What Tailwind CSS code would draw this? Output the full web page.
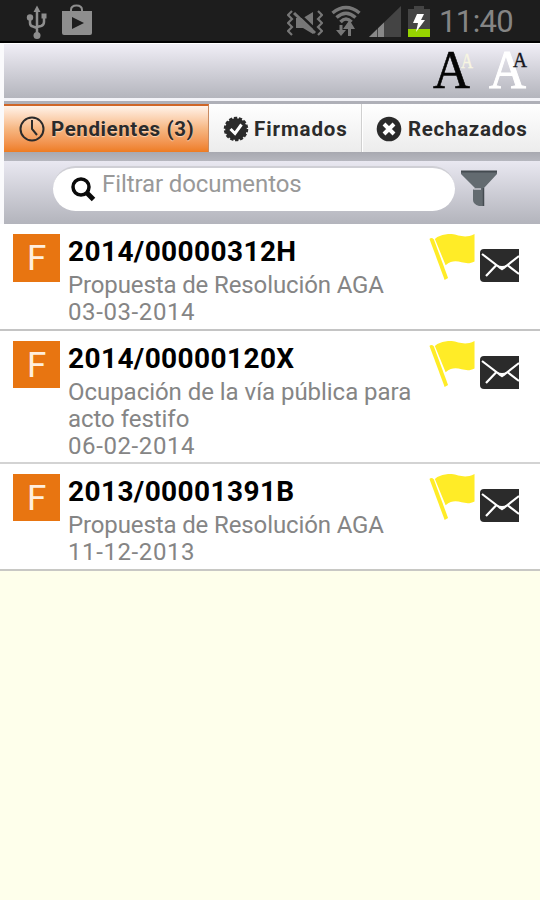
<!DOCTYPE html>
<html lang="es">
  <head>
    <meta charset="UTF-8" />
    <meta name="viewport" content="width=device-width, initial-scale=1.0" />
    <!-- tailwind cdn -->
    <script src="https://cdn.jsdelivr.net/npm/@tailwindcss/browser@4"></script>
    <title>Documentos pendientes</title>
  </head>
  <body class="bg-[#feffeb] font-['Roboto',sans-serif]">
    <!-- icons used more than once -->
    <svg class="hidden">
      <symbol id="flag" viewBox="0 0 48 48">
        <path d="M1 5 Q3 3 5.500 5.500 L20 45 L16.500 47 Z"></path>
        <path d="M6.500 5 L9 3 Q14 0.500 20 0 C29-1 35 6 47 0 L47 28 C36 34 29 22 17.500 32 Z"></path>
      </symbol>
      <symbol id="mail" viewBox="0 0 40 33">
        <path d="M4 0 H39 V33 H4 Q0 33 0 29 V4 Q0 0 4 0 Z" fill="#2b2b2b"></path>
        <path
          d="M2 5 L19 18 Q22 21 25 18 L39 7 M6 27 L16 16.500 M28 16.500 L39 25"
          fill="none"
          stroke="#fff"
          stroke-width="2.200"
        ></path>
        <path d="M17 16 Q22 18 27 16 L22 21.500 Z" fill="#fff"></path>
      </symbol>
    </svg>
    <div class="flex h-[900px] w-[540px] flex-col overflow-hidden">
      <!-- status bar -->
      <div class="flex h-[43px] shrink-0 items-start border-b-2 border-black bg-[#1d1d1d] pl-[26px] text-[#8e8e8e]">
        <svg class="mt-[5px] h-[35px] w-[22px]" viewBox="0 0 22 35" fill="none" stroke="currentColor" stroke-width="2.500">
          <path d="M11 5 V30 M4 13 V18 Q4 21 7 21.500 L11 23 M18 11 V17 Q18 20 15 21 L11 22"></path>
          <path d="M11 0.500 L14.500 7 H7.500 Z M15.500 8.500 H20.500 V13.500 H15.500 Z" fill="currentColor" stroke="none"></path>
          <circle cx="4" cy="12.500" r="3.200" fill="currentColor" stroke="none"></circle>
          <circle cx="11" cy="30.500" r="3.500" fill="currentColor" stroke="none"></circle>
        </svg>
        <svg class="mt-[4px] ml-[14px] h-[31px] w-[30px]" viewBox="0 0 30 31">
          <path d="M9 8 V6 Q9 1.500 14.500 1.500 T20 6 V8" fill="none" stroke="currentColor" stroke-width="2"></path>
          <path d="M0 7 H30 V29 Q30 31 28 31 H2 Q0 31 0 29 Z" fill="currentColor"></path>
          <path d="M10 13 L22 19 L10 25 Z" fill="#1d1d1d"></path>
        </svg>
        <svg class="mt-[10px] ml-[195px] h-[26px] w-[36px] text-[#777]" viewBox="0 0 36 26" fill="none" stroke="currentColor" stroke-width="2.200">
          <path d="M5 1 L1 5 L5 9 L1 13 L5 17 L1 21 L5 25 M31 1 L35 5 L31 9 L35 13 L31 17 L35 21 L31 25"></path>
          <path d="M9 8 H16 L26 2 V24 L16 18 H9 Z" fill="currentColor" stroke="none"></path>
          <path d="M9 1 L30 21" stroke="#1d1d1d" stroke-width="2.500"></path>
          <path d="M7 3 L28 23" stroke-width="3"></path>
        </svg>
        <svg class="mt-[5px] ml-[8px] h-[32px] w-[30px] text-[#777]" viewBox="0 0 30 32" fill="none" stroke="currentColor" stroke-width="3.500">
          <path d="M1.500 8 Q15-3 28.500 8 M5.500 12.500 Q15 4 24.500 12.500 M9.500 17 Q15 11 20.500 17"></path>
          <path d="M10 20 V27 M18.500 31 V20" stroke-width="3"></path>
          <path d="M5 25 H15 L10 31 Z M12 24 L18.500 15 L24 24 Z" fill="currentColor" stroke="none"></path>
        </svg>
        <svg class="mt-[6px] ml-[8px] h-[31px] w-[32px]" viewBox="0 0 32 31">
          <path d="M0 31 L32 0 V31 Z" fill="#444"></path>
          <path d="M0 31 L8 23.300 V31 Z M9 31 V22.300 L15 16.500 V31 Z" fill="#888"></path>
        </svg>
        <svg class="mt-[6px] ml-[7px] h-[32px] w-[22px]" viewBox="0 0 22 32">
          <path d="M0 3 H6 V0 H16 V3 H22 V23 H0 Z" fill="#444"></path>
          <path d="M0 23 H22 V31 H0 Z" fill="#96d400"></path>
          <path d="M9 8 H16 L13 14 H17 L8 26 L10 17 H5 Z" fill="#fff"></path>
        </svg>
        <div class="ml-[9px] text-[31px] leading-[43px] tracking-[-0.6px] text-[#858585]">11:40</div>
      </div>

      <div class="bg-[#fafafc] pl-1">
        <!-- text size buttons -->
        <header class="flex h-[55px] justify-end border-t border-white bg-linear-to-b from-[#f0eef6] to-[#b4b5bd] pr-[12px]">
          <svg class="h-[54px] w-[95px] overflow-visible font-['Liberation_Serif',serif]" viewBox="0 0 95 54">
            <text x="0" y="44" font-size="54" textLength="37" lengthAdjust="spacingAndGlyphs" fill="#050505" stroke="#050505" stroke-width="0.600">A</text>
            <text x="28" y="24" font-size="22" textLength="12" lengthAdjust="spacingAndGlyphs" fill="#f8f6e2" stroke="#f8f6e2" stroke-width="0.400">A</text>
            <text x="56" y="44" font-size="54" textLength="37" lengthAdjust="spacingAndGlyphs" fill="#fff" stroke="#fff" stroke-width="1">A</text>
            <text x="80" y="23" font-size="22" textLength="14" lengthAdjust="spacingAndGlyphs" fill="#15151c" stroke="#15151c" stroke-width="0.400">A</text>
          </svg>
        </header>
        <div class="h-[6px] border-t-3 border-[#f3f3f8] bg-[#afb0b8]"></div>

        <!-- tabs -->
        <nav class="flex h-[48px] bg-linear-to-b from-white to-[#ececec] text-[20.500px] font-bold tracking-[0.6px] text-[#2b2b2b]">
          <a class="flex w-[205px] items-center border-t-2 border-r border-t-[#cf6526] border-r-[#c98a60] bg-linear-to-b from-[#fff3ea] via-[#f6b681] to-[#ee7c20] pl-[15px]" href="#">
            <svg class="h-[26px] w-[26px]" viewBox="0 0 26 26" fill="none" stroke="currentColor" stroke-width="2">
              <circle cx="13" cy="13" r="11.500"></circle>
              <path d="M13 4 V13 L18 19"></path>
            </svg>
            <span class="ml-[6px] whitespace-nowrap text-shadow-[0_1px_1px_#fff8]">Pendientes (3)</span>
          </a>
          <a class="flex w-[153px] items-center border-r border-[#d0d0d0] pt-[2px] pl-[14px]" href="#">
            <svg class="h-[26px] w-[26px]" viewBox="0 0 26 26">
              <circle cx="13" cy="13" r="10.800" fill="currentColor"></circle>
              <circle cx="13" cy="13" r="11" fill="none" stroke="currentColor" stroke-width="2.500" stroke-dasharray="3.300 1.640"></circle>
              <path d="M7.500 13 L12 17.500 L18.500 8.500" fill="none" stroke="#fff" stroke-width="3"></path>
            </svg>
            <span class="ml-[5px] tracking-[0.9px]">Firmados</span>
          </a>
          <a class="flex grow items-center border-l border-white pt-[2px] pl-[13px]" href="#">
            <svg class="h-[26px] w-[26px] shrink-0" viewBox="0 0 26 26">
              <circle cx="13" cy="13" r="12.300" fill="currentColor"></circle>
              <path d="M8 8 L18 18 M18 8 L8 18" stroke="#fff" stroke-width="4"></path>
            </svg>
            <span class="ml-[6px] tracking-[0.7px]">Rechazados</span>
          </a>
        </nav>
        <div class="h-[9px] bg-linear-to-b from-[#a8a9b0] to-[#b6b7bf]"></div>

        <!-- search -->
        <div class="flex h-[63px] bg-linear-to-b from-[#e9e8f1] to-[#b3b4bc] pt-[5px] pl-[49px]">
          <div class="flex h-[45px] w-[402px] rounded-full border-t-2 border-[#cfcfd5] bg-white pl-[18px]">
            <svg class="mt-[9px] h-[25px] w-[25px]" viewBox="0 0 25 25" fill="none" stroke="#0a0a0a">
              <circle cx="10" cy="10" r="8" stroke-width="3.500"></circle>
              <path d="M16 16 L22.500 22.500" stroke-width="5"></path>
            </svg>
            <span class="ml-[6px] text-[24px] leading-[33px] tracking-[-0.1px] text-[#999]">Filtrar documentos</span>
          </div>
          <svg class="mt-[4px] ml-[6px] h-[38px] w-[36px]" viewBox="0 0 36 38">
            <path d="M0 1 H36 V4 L23 18 V36 H18 Q12 34 12 30 V20 L14 18 L0 4 Z" fill="#636b70"></path>
            <path d="M0 1.500 H36" stroke="#444b50" stroke-width="2"></path>
            <path d="M13 19 H20" stroke="#c8c9d0" stroke-width="1.500"></path>
            <path d="M22.500 18 V36" stroke="#444b50" stroke-width="1.500"></path>
          </svg>
        </div>
      </div>

      <!-- documents -->
      <main class="bg-white text-[24px] leading-[27px] tracking-[-0.12px] text-[#858585]">
        <article class="flex h-[107px] border-b-2 border-[#c4c4c4] pt-[10px] pl-[13px]">
          <div class="h-[48px] w-[47px] shrink-0 bg-[#e87511] text-center text-[35px] leading-[50px] text-[#ffeedd]">F</div>
          <div class="ml-[8px] w-[360px]">
            <h2 class="mb-[3px] text-[28px] leading-[35px] font-bold tracking-[0.4px] text-black">2014/00000312H</h2>
            <p>Propuesta de Resolución AGA</p>
            <p class="tracking-[0.6px]">03-03-2014</p>
          </div>
          <svg class="h-[47px] w-[48px] shrink-0 fill-[#ffec27]"><use href="#flag"></use></svg>
          <svg class="mt-[15px] ml-[4px] h-[33px] w-[40px] shrink-0"><use href="#mail"></use></svg>
        </article>
        <article class="flex h-[133px] border-b-2 border-[#d3d3d3] pt-[10px] pl-[13px]">
          <div class="h-[47px] w-[47px] shrink-0 bg-[#e87511] text-center text-[35px] leading-[50px] text-[#ffeedd]">F</div>
          <div class="ml-[8px] w-[360px]">
            <h2 class="mb-[3px] text-[28px] leading-[35px] font-bold tracking-[0.4px] text-black">2014/00000120X</h2>
            <p class="tracking-[-0.04px]">Ocupación de la vía pública para<br />acto festifo</p>
            <p class="tracking-[0.6px]">06-02-2014</p>
          </div>
          <svg class="h-[47px] w-[48px] shrink-0 fill-[#ffec27]"><use href="#flag"></use></svg>
          <svg class="mt-[15px] ml-[4px] h-[33px] w-[40px] shrink-0"><use href="#mail"></use></svg>
        </article>
        <article class="flex h-[107px] border-b-2 border-[#c8c8c4] pt-[10px] pl-[13px]">
          <div class="h-[47px] w-[47px] shrink-0 bg-[#e87511] text-center text-[35px] leading-[50px] text-[#ffeedd]">F</div>
          <div class="ml-[8px] w-[360px]">
            <h2 class="mb-[3px] text-[28px] leading-[35px] font-bold tracking-[0.4px] text-black">2013/00001391B</h2>
            <p>Propuesta de Resolución AGA</p>
            <p class="tracking-[0.6px]">11-12-2013</p>
          </div>
          <svg class="h-[47px] w-[48px] shrink-0 fill-[#ffec27]"><use href="#flag"></use></svg>
          <svg class="mt-[15px] ml-[4px] h-[33px] w-[40px] shrink-0"><use href="#mail"></use></svg>
        </article>
      </main>
    </div>
  </body>
</html>
